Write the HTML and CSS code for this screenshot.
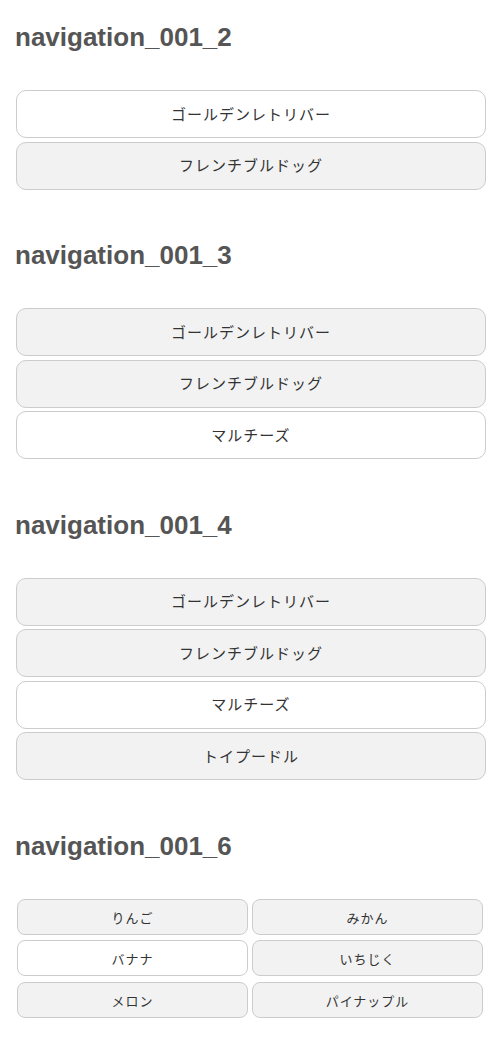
FILE: index.html
```html
<!DOCTYPE html>
<html lang="ja">

<head>
    <meta charset="UTF-8">
    <meta name="viewport" content="width=device-width, initial-scale=1.0">
    <title>navigation_001</title>
    <link rel="stylesheet" href="styles.css">
</head>

<body>
    <section class="demo">
        <h2>navigation_001_2</h2>
        <ul class="nav-list">
            <li><a href="#" class="current">ゴールデンレトリバー</a></li>
            <li><a href="#">フレンチブルドッグ</a></li>
        </ul>
    </section>

    <section class="demo">
        <h2>navigation_001_3</h2>
        <ul class="nav-list">
            <li><a href="#">ゴールデンレトリバー</a></li>
            <li><a href="#">フレンチブルドッグ</a></li>
            <li><a href="#" class="current">マルチーズ</a></li>
        </ul>
    </section>

    <section class="demo">
        <h2>navigation_001_4</h2>
        <ul class="nav-list">
            <li><a href="#">ゴールデンレトリバー</a></li>
            <li><a href="#">フレンチブルドッグ</a></li>
            <li><a href="#" class="current">マルチーズ</a></li>
            <li><a href="#">トイプードル</a></li>
        </ul>
    </section>

    <section class="demo">
        <h2>navigation_001_6</h2>
        <ul class="nav-grid">
            <li><a href="#">りんご</a></li>
            <li><a href="#">みかん</a></li>
            <li><a href="#" class="current">バナナ</a></li>
            <li><a href="#">いちじく</a></li>
            <li><a href="#">メロン</a></li>
            <li><a href="#">パイナップル</a></li>
        </ul>
    </section>
</body>

</html>
```

FILE: styles.css
```css
body {
    font-family: "Liberation Sans", Arial, "Noto Sans CJK JP", sans-serif;
    background-color: #fff;
    color: #333;
    margin: 0;
    padding: 0;
}

.demo {
    padding-top: 22px;
    margin-bottom: 28.5px;
}

.demo h2 {
    margin: 0 15px 38px;
    font-size: 26px;
    line-height: 30px;
    font-weight: bold;
    color: #555;
}

.nav-list,
.nav-grid {
    list-style: none;
    margin: 0;
    padding: 0;
}

.nav-list {
    display: flex;
    flex-direction: column;
    gap: 3.5px;
    margin: 0 14px 0 16px;
}

.nav-grid {
    display: grid;
    grid-template-columns: 1fr 1fr;
    column-gap: 4px;
    row-gap: 5.5px;
    margin: 0 17px;
}

.nav-list a,
.nav-grid a {
    display: flex;
    align-items: center;
    justify-content: center;
    box-sizing: border-box;
    font-family: "Noto Sans CJK JP", sans-serif;
    letter-spacing: 1px;
    color: #333;
    text-decoration: none;
    background-color: #f2f2f2;
    border: 1px solid #ccc;
}

.nav-list a {
    height: 48px;
    padding-bottom: 2px;
    font-size: 15px;
    border-radius: 10px;
}

.nav-grid a {
    height: 36px;
    padding-top: 1px;
    font-size: 13px;
    border-radius: 8px;
}

.nav-list a.current,
.nav-grid a.current {
    background-color: #fff;
}
```
